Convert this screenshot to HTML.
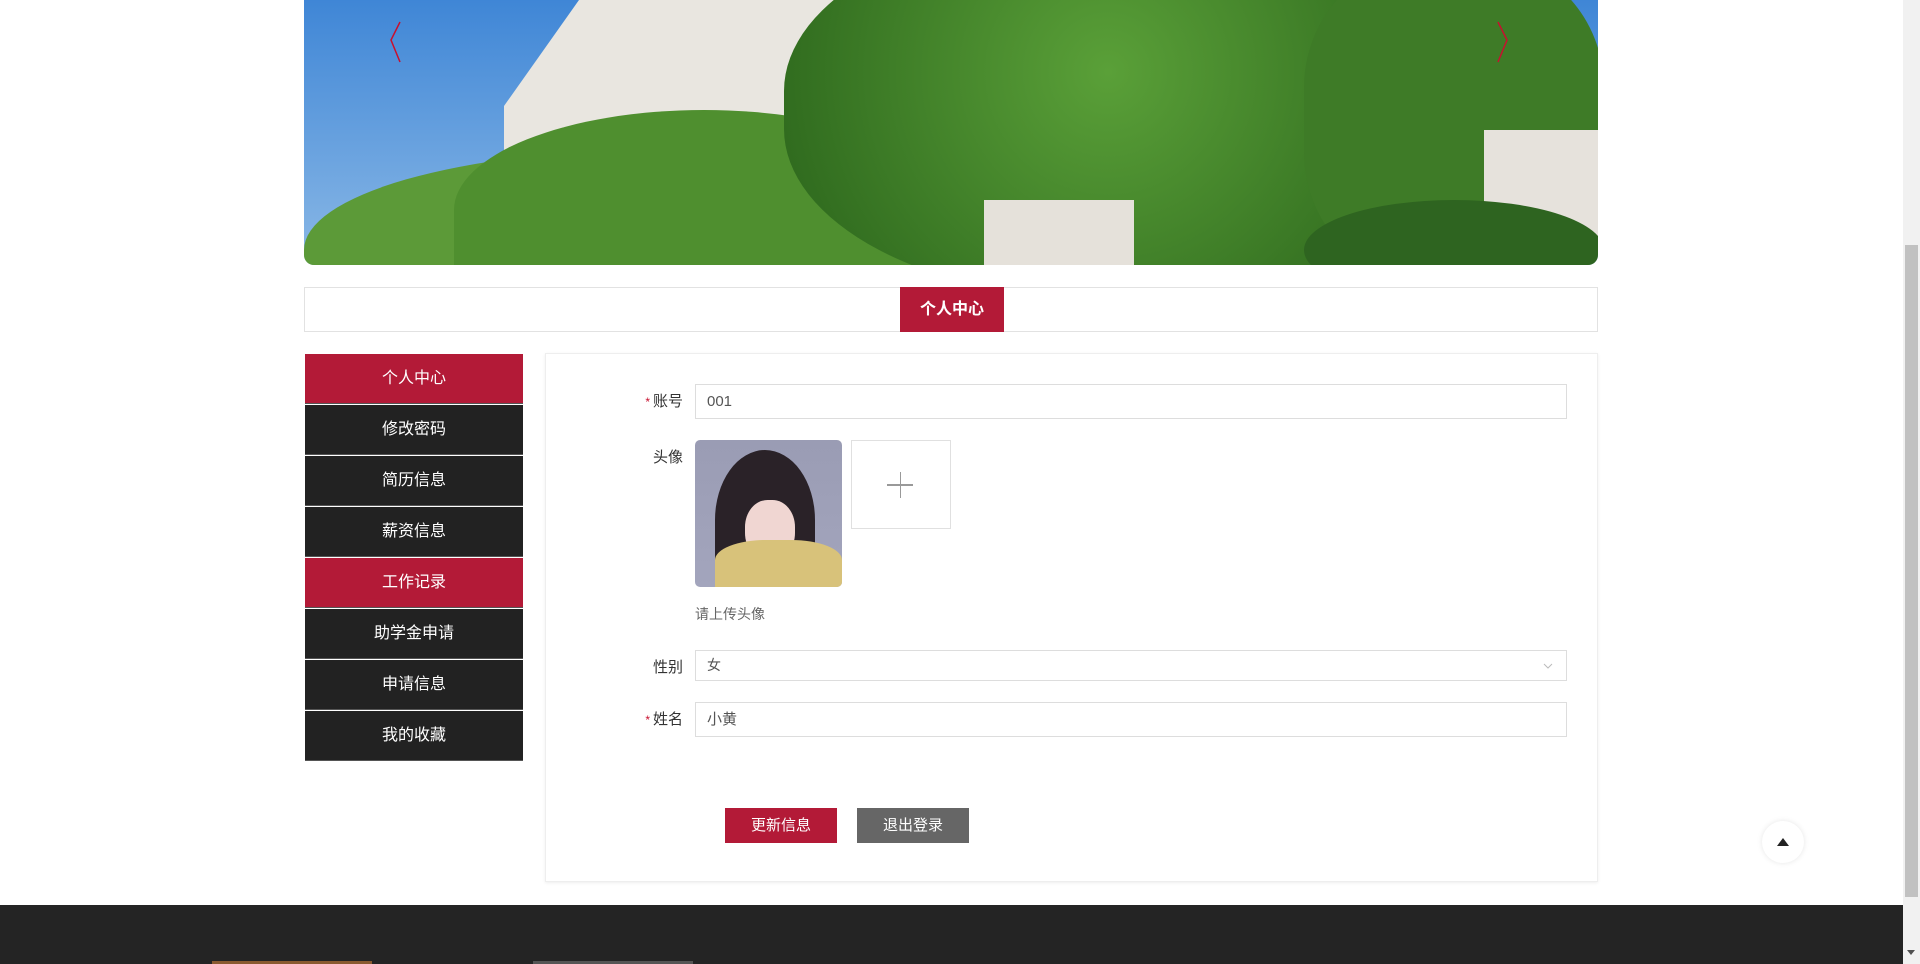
<!DOCTYPE html>
<html><head><meta charset="utf-8"><style>
*{margin:0;padding:0;box-sizing:border-box}
body{width:1920px;height:964px;overflow:hidden;background:#fff;font-family:"Liberation Sans","Noto Sans CJK SC",sans-serif;position:relative}
.abs{position:absolute}
.banner{left:304px;top:0;width:1294px;height:265px;border-radius:0 0 10px 10px;overflow:hidden;background:linear-gradient(180deg,#3f86d6,#8ab8e6)}
.side div{position:absolute;left:305px;width:218px;height:50px;color:#fff;font-size:16px;text-align:center;line-height:50px;background:#222;border-bottom:1px solid #555}
.side div.on{background:#b31a37}
.lbl{position:absolute;font-size:15px;color:#333;text-align:right;width:80px;left:603px}
.lbl i{color:#c8102e;font-style:normal;font-size:12px;margin-right:3px}
.inp{position:absolute;left:695px;width:872px;border:1px solid #ddd;font-size:15px;color:#555;padding-left:11px}
</style></head><body>
<div class="abs banner">
 <div class="abs" style="left:200px;top:0;width:500px;height:265px;background:#e9e6e0;clip-path:polygon(15% 0,100% 0,100% 100%,0 100%,0 40%)"></div>
 <div class="abs" style="left:0;top:150px;width:700px;height:200px;border-radius:50% 50% 0 0;background:#5c9a38"></div>
 <div class="abs" style="left:150px;top:110px;width:500px;height:200px;border-radius:50% 50% 0 0;background:#4f8f2f"></div>
 <div class="abs" style="left:480px;top:-80px;width:720px;height:380px;border-radius:45%;background:radial-gradient(circle at 45% 40%,#5aa038,#2f6a1e 75%)"></div>
 <div class="abs" style="left:1000px;top:-40px;width:300px;height:320px;border-radius:40%;background:#3e7b27"></div>
 <div class="abs" style="left:1180px;top:130px;width:114px;height:110px;background:#e6e2dc"></div>
 <div class="abs" style="left:1000px;top:200px;width:300px;height:100px;border-radius:50%;background:#2e6420"></div>
 <div class="abs" style="left:680px;top:200px;width:150px;height:65px;background:#e5e1da"></div>
 <svg class="abs" style="left:80px;top:18px" width="20" height="48"><path d="M16 4 L7 22 L16 44" stroke="#c8102e" stroke-width="1.5" fill="none"/></svg>
 <svg class="abs" style="left:1190px;top:18px" width="20" height="48"><path d="M4 4 L13 22 L4 44" stroke="#c8102e" stroke-width="1.5" fill="none"/></svg>
</div>
<div class="abs" style="left:304px;top:287px;width:1294px;height:45px;border:1px solid #e2e2e2"></div>
<div class="abs" style="left:900px;top:287px;width:104px;height:45px;background:#b31a37;color:#fff;font-size:16px;font-weight:bold;text-align:center;line-height:45px">个人中心</div>
<div class="side">
<div class="on" style="top:354px">个人中心</div>
<div style="top:405px">修改密码</div>
<div style="top:456px">简历信息</div>
<div style="top:507px">薪资信息</div>
<div class="on" style="top:558px">工作记录</div>
<div style="top:609px">助学金申请</div>
<div style="top:660px">申请信息</div>
<div style="top:711px">我的收藏</div>
</div>
<div class="abs" style="left:545px;top:353px;width:1053px;height:529px;border:1px solid #eee;box-shadow:0 1px 3px #eee"></div>
<div class="lbl" style="top:390px"><i>*</i>账号</div>
<div class="inp" style="top:384px;height:35px;line-height:33px">001</div>
<div class="lbl" style="top:446px">头像</div>
<div class="abs" style="left:695px;top:440px;width:147px;height:147px;border-radius:5px;overflow:hidden;background:linear-gradient(180deg,#9a9cb4,#a3a5bd)">
 <div class="abs" style="left:20px;top:10px;width:100px;height:140px;border-radius:50% 50% 0 0;background:#2a2228"></div>
 <div class="abs" style="left:50px;top:60px;width:50px;height:60px;border-radius:45%;background:#f0d6d2"></div>
 <div class="abs" style="left:20px;top:100px;width:127px;height:50px;border-radius:40% 40% 0 0;background:#d8c27a"></div>
</div>
<div class="abs" style="left:851px;top:440px;width:100px;height:89px;border:1px solid #e0e0e0"></div>
<div class="abs" style="left:887px;top:484px;width:26px;height:1.5px;background:#999"></div>
<div class="abs" style="left:899.5px;top:472px;width:1.5px;height:26px;background:#999"></div>
<div class="abs" style="left:695px;top:604px;font-size:14px;color:#666">请上传头像</div>
<div class="lbl" style="top:656px">性别</div>
<div class="inp" style="top:650px;height:31px;line-height:29px;font-size:14px">女</div>
<svg class="abs" style="left:1542px;top:660px" width="12" height="12"><path d="M2 4 L6 8 L10 4" stroke="#bbb" fill="none"/></svg>
<div class="lbl" style="top:708px"><i>*</i>姓名</div>
<div class="inp" style="top:702px;height:35px;line-height:33px">小黄</div>
<div class="abs" style="left:725px;top:808px;width:112px;height:35px;background:#b31a37;color:#fff;font-size:15px;text-align:center;line-height:35px">更新信息</div>
<div class="abs" style="left:857px;top:808px;width:112px;height:35px;background:#666;color:#fff;font-size:15px;text-align:center;line-height:35px">退出登录</div>
<div class="abs" style="left:1762px;top:821px;width:42px;height:42px;border-radius:50%;background:#fff;box-shadow:0 0 6px #e6e6e6"></div>
<div class="abs" style="left:1777px;top:838px;width:0;height:0;border-left:6px solid transparent;border-right:6px solid transparent;border-bottom:8px solid #222"></div>
<div class="abs" style="left:0;top:905px;width:1903px;height:59px;background:#242424"></div>
<div class="abs" style="left:212px;top:961px;width:160px;height:3px;background:#8a5a30"></div>
<div class="abs" style="left:533px;top:961px;width:160px;height:3px;background:#555"></div>
<div class="abs" style="left:1903px;top:0;width:17px;height:964px;background:#f1f1f1"></div>
<div class="abs" style="left:1905px;top:245px;width:13px;height:652px;background:#c1c1c1"></div>
<div class="abs" style="left:1907px;top:950px;width:0;height:0;border-left:4px solid transparent;border-right:4px solid transparent;border-top:5px solid #505050"></div>
</body></html>
